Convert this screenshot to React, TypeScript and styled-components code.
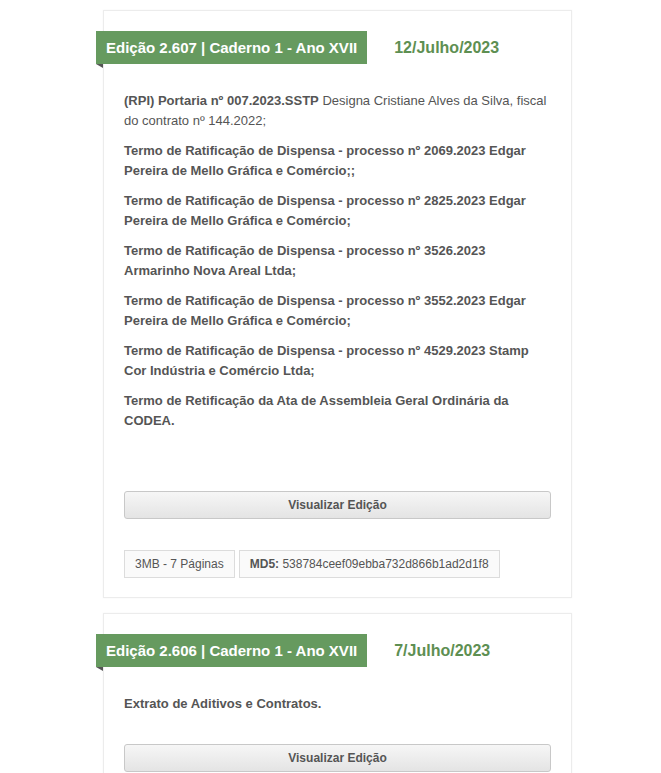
import styled, { createGlobalStyle } from "styled-components";

const GlobalStyle = createGlobalStyle`
  body {
    margin: 0;
    background: #fff;
    font-family: "Liberation Sans", Arial, sans-serif;
    color: #555;
  }
`;

const Page = styled.div`
  padding: 10px 0 0 103px;
  display: flex;
  flex-direction: column;
  gap: 15px;
`;

const Card = styled.article`
  width: 469px;
  box-sizing: border-box;
  border: 1px solid #ececec;
  box-shadow: 0 0 2px rgba(0, 0, 0, 0.04);
  padding: 20px 20px 19px 20px;
`;

const Header = styled.header`
  display: flex;
  align-items: center;
  gap: 27px;
  margin-left: -28px;
`;

const Ribbon = styled.h2`
  position: relative;
  margin: 0;
  height: 33px;
  line-height: 33px;
  padding: 0 10px;
  background: #669a5f;
  color: #fff;
  font-size: 15px;
  font-weight: bold;

  &::after {
    content: "";
    position: absolute;
    left: 0;
    top: 100%;
    border-top: 4px solid #555;
    border-left: 7px solid transparent;
  }
`;

const DateLabel = styled.span`
  color: #5e8f52;
  font-size: 16px;
  font-weight: bold;
`;

const Description = styled.div<{ $tail?: boolean }>`
  display: flow-root;
  margin-top: 27px;
  padding-bottom: ${(p) => (p.$tail ? "29px" : "0")};
  font-size: 13px;
  line-height: 20px;

  p {
    margin: 0 0 10px;
  }
`;

const Strong = styled.b`
  font-weight: bold;
`;

const Button = styled.button<{ $gap?: number }>`
  display: block;
  width: 100%;
  height: 28px;
  margin-top: ${(p) => p.$gap ?? 21}px;
  border: 1px solid #c8c8c8;
  border-radius: 3px;
  background: linear-gradient(#f6f6f6, #e4e4e4);
  color: #555;
  font-family: inherit;
  font-size: 12px;
  font-weight: bold;
  cursor: pointer;
`;

const Meta = styled.div`
  display: flex;
  gap: 4px;
  margin-top: 31px;
`;

const Badge = styled.span`
  height: 28px;
  line-height: 26px;
  box-sizing: border-box;
  padding: 0 10px;
  border: 1px solid #dcdcdc;
  background: #fafafa;
  font-size: 12px;
  color: #555;
`;

type Edition = {
  title: string;
  date: string;
  items: React.ReactNode[];
  tail?: boolean;
  buttonGap?: number;
  size?: string;
  md5?: string;
};

const editions: Edition[] = [
  {
    title: "Edição 2.607 | Caderno 1 - Ano XVII",
    date: "12/Julho/2023",
    tail: true,
    size: "3MB - 7 Páginas",
    md5: "538784ceef09ebba732d866b1ad2d1f8",
    items: [
      <>
        <Strong>(RPI) Portaria nº 007.2023.SSTP</Strong> Designa Cristiane Alves
        da Silva, fiscal do contrato nº 144.2022;
      </>,
      <Strong>
        Termo de Ratificação de Dispensa - processo nº 2069.2023 Edgar Pereira
        de Mello Gráfica e Comércio;;
      </Strong>,
      <Strong>
        Termo de Ratificação de Dispensa - processo nº 2825.2023 Edgar Pereira
        de Mello Gráfica e Comércio;
      </Strong>,
      <Strong>
        Termo de Ratificação de Dispensa - processo nº 3526.2023 Armarinho Nova
        Areal Ltda;
      </Strong>,
      <Strong>
        Termo de Ratificação de Dispensa - processo nº 3552.2023 Edgar Pereira
        de Mello Gráfica e Comércio;
      </Strong>,
      <Strong>
        Termo de Ratificação de Dispensa - processo nº 4529.2023 Stamp Cor
        Indústria e Comércio Ltda;
      </Strong>,
      <Strong>
        Termo de Retificação da Ata de Assembleia Geral Ordinária da CODEA.
      </Strong>,
    ],
  },
  {
    title: "Edição 2.606 | Caderno 1 - Ano XVII",
    date: "7/Julho/2023",
    buttonGap: 20,
    items: [<Strong>Extrato de Aditivos e Contratos.</Strong>],
  },
];

export default function App() {
  return (
    <>
      <GlobalStyle />
      <Page>
        {editions.map((ed) => (
          <Card key={ed.title}>
            <Header>
              <Ribbon>{ed.title}</Ribbon>
              <DateLabel>{ed.date}</DateLabel>
            </Header>
            <Description $tail={ed.tail}>
              {ed.items.map((item, i) => (
                <p key={i}>{item}</p>
              ))}
            </Description>
            <Button $gap={ed.buttonGap}>Visualizar Edição</Button>
            {ed.size && (
              <Meta>
                <Badge>{ed.size}</Badge>
                <Badge>
                  <Strong>MD5:</Strong> {ed.md5}
                </Badge>
              </Meta>
            )}
          </Card>
        ))}
      </Page>
    </>
  );
}
